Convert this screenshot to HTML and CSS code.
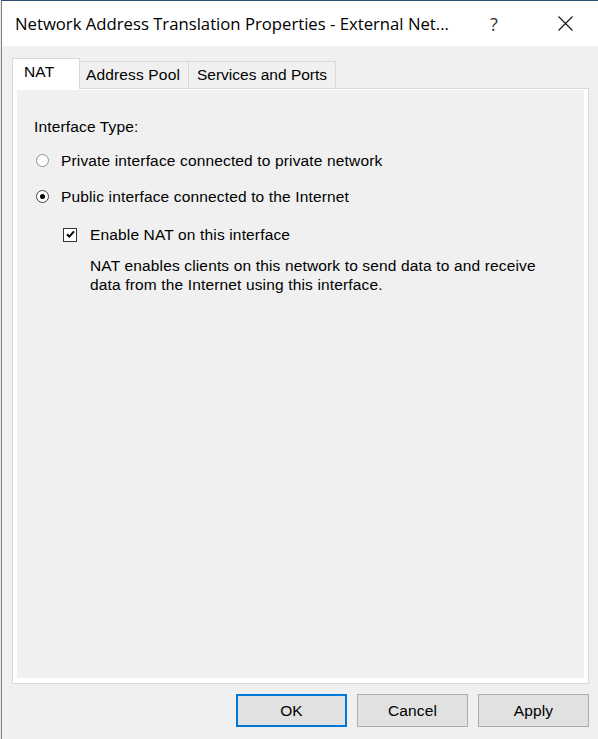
FILE: index.html
```html
<!DOCTYPE html>
<html>
<head>
<meta charset="utf-8">
<link rel="stylesheet" href="styles.css">
</head>
<body>
<div class="window">
  <div class="titlebar">
    <span class="title">Network Address Translation Properties - External Net...</span>
    <span class="cap-help">?</span>
    <span class="cap-close"><svg width="15" height="15" viewBox="0 0 15 15"><path d="M0.5 0.5 L14.5 14.5 M14.5 0.5 L0.5 14.5" stroke="#111" stroke-width="1.1" fill="none"/></svg></span>
  </div>
  <div class="dialog">
    <div class="tabs">
      <div class="tab active tab-nat">NAT</div>
      <div class="tab tab-pool">Address Pool</div>
      <div class="tab tab-svc">Services and Ports</div>
    </div>
    <div class="pane">
      <div class="page">
        <div class="label">Interface Type:</div>
        <div class="option opt-1"><span class="radio"></span>Private interface connected to private network</div>
        <div class="option opt-2"><span class="radio checked"></span>Public interface connected to the Internet</div>
        <div class="sub">
          <div class="check-row"><span class="checkbox"><svg width="11" height="11" viewBox="0 0 11 11"><path d="M2 5.2 L4.3 7.6 L9 2.4" stroke="#000" stroke-width="2" fill="none"/></svg></span>Enable NAT on this interface</div>
          <p class="desc">NAT enables clients on this network to send data to and receive<br>data from the Internet using this interface.</p>
        </div>
      </div>
    </div>
    <div class="buttons">
      <div class="btn default">OK</div>
      <div class="btn">Cancel</div>
      <div class="btn">Apply</div>
    </div>
  </div>
</div>
</body>
</html>
```

FILE: styles.css
```css
html, body {
  margin: 0;
  padding: 0;
}
body {
  background: #e9e9e9;
  font-family: "Liberation Sans", Arial, sans-serif;
  font-size: 15.5px;
  letter-spacing: 0.15px;
  color: #000;
  overflow: hidden;
  height: 739px;
}
.window {
  margin-left: 1px;
  border-left: 1px solid #808080;
  border-top: 1px solid #2a4d70;
  background: #f0f0f0;
  height: 738px;
}
.titlebar {
  height: 45px;
  background: #fff;
  display: flex;
  align-items: center;
  letter-spacing: 0;
}
.title {
  flex: 1;
  padding-left: 13px;
  font-family: "Open Sans", "Noto Sans", sans-serif;
  font-size: 16.7px;
  white-space: nowrap;
  color: #000;
}
.cap-help {
  width: 66px;
  margin-right: 5px;
  text-align: center;
  font-family: "Open Sans", "Noto Sans", sans-serif;
  font-size: 18px;
  color: #333;
}
.cap-close {
  width: 66px;
  display: flex;
  justify-content: center;
}
.dialog {
  padding: 12px 9px 0 10px;
}
.tabs {
  display: flex;
  align-items: flex-end;
  height: 30px;
}
.tab {
  box-sizing: border-box;
  height: 27px;
  border: 1px solid #d9d9d9;
  border-bottom: none;
  background: #f0f0f0;
  padding-top: 4px;
  line-height: 18px;
  white-space: nowrap;
  margin-left: -1px;
}
.tab.active {
  height: 31px;
  background: #fff;
  margin-bottom: -1px;
  margin-left: 0;
  position: relative;
  z-index: 1;
}
.tab-nat {
  width: 68px;
  padding-left: 11px;
}
.tab-pool {
  width: 110px;
  padding-left: 6px;
}
.tab-svc {
  width: 148px;
  padding-left: 8px;
  letter-spacing: 0;
}
.pane {
  box-sizing: border-box;
  height: 596px;
  border: 1px solid #d9d9d9;
  background: #fff;
  padding: 1px 4px 5px 4px;
}
.page {
  box-sizing: border-box;
  height: 100%;
  background: #f0f0f0;
  padding: 27px 0 0 17px;
  line-height: 19px;
}
.label {
  height: 19px;
}
.option {
  display: flex;
  align-items: center;
  height: 19px;
}
.opt-1 {
  margin-top: 15px;
}
.opt-2 {
  margin-top: 17px;
}
.radio {
  box-sizing: border-box;
  width: 13px;
  height: 13px;
  border-radius: 50%;
  border: 1px solid #8f8f8f;
  background: #fff;
  margin-left: 2px;
  margin-right: 12px;
  display: flex;
  align-items: center;
  justify-content: center;
}
.radio.checked {
  border-color: #444;
}
.radio.checked::after {
  content: "";
  width: 5px;
  height: 5px;
  border-radius: 50%;
  background: #000;
}
.sub {
  padding-left: 29px;
  margin-top: 19px;
}
.check-row {
  display: flex;
  align-items: center;
  height: 19px;
}
.checkbox {
  box-sizing: border-box;
  width: 14px;
  height: 14px;
  border: 1px solid #333;
  background: #fff;
  margin-right: 13px;
  display: flex;
  align-items: center;
  justify-content: center;
}
.desc {
  margin: 12px 0 0 27px;
  line-height: 19px;
}
.buttons {
  display: flex;
  justify-content: flex-end;
  gap: 10px;
  margin-top: 10px;
}
.btn {
  box-sizing: border-box;
  width: 111px;
  height: 33px;
  border: 1px solid #adadad;
  background: #e1e1e1;
  display: flex;
  align-items: center;
  justify-content: center;
}
.btn.default {
  border: 2px solid #0078d7;
}
```
